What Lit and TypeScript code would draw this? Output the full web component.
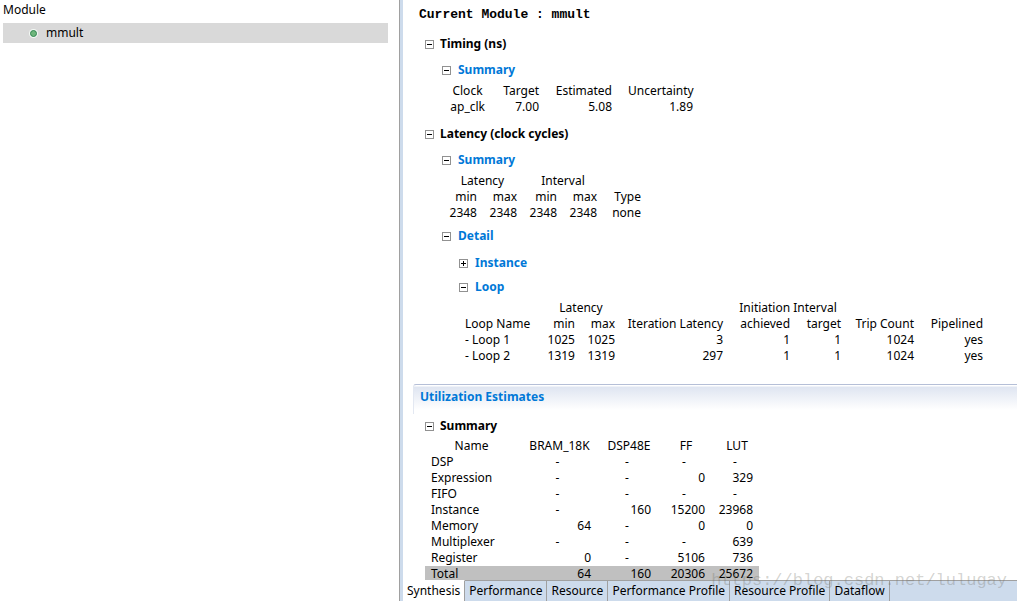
import { LitElement, html, css, svg, nothing } from "lit";
import { customElement, property, state } from "lit/decorators.js";
import { classMap } from "lit/directives/class-map.js";

interface HeadCell {
  text: string;
  span?: number;
}

const TABS = ["Synthesis", "Performance", "Resource", "Performance Profile", "Resource Profile", "Dataflow"];

@customElement("report-section")
class ReportSection extends LitElement {
  static styles = css`
    :host {
      display: block;
    }
    .heading {
      margin: 0;
      font-size: 12px;
      line-height: 16px;
    }
    .toggle {
      display: flex;
      align-items: center;
      gap: 6px;
      height: 26px;
      padding: 0;
      border: 0;
      background: none;
      color: #000;
      font: bold 12px/16px "Noto Sans", sans-serif;
      cursor: pointer;
    }
    .compact {
      height: 24px;
    }
    .accent {
      gap: 7px;
      color: #0078d7;
    }
    .box {
      flex: none;
      display: block;
    }
  `;

  @property() label = "";
  @property({ type: Boolean }) accent = false;
  @property({ type: Boolean }) compact = false;
  @property({ type: Boolean }) open = false;

  render() {
    return html`
      <h3 class="heading">
        <button
          class=${classMap({ toggle: true, accent: this.accent, compact: this.compact })}
          aria-expanded=${this.open ? "true" : "false"}
          @click=${() => (this.open = !this.open)}
        >
          <svg class="box" width="9" height="9" viewBox="0 0 9 9" shape-rendering="crispEdges" aria-hidden="true">
            <rect x="0.5" y="0.5" width="8" height="8" fill="#fff" stroke="#919191" />
            <path d="M2 4.5H7" stroke="#000" />
            ${this.open ? nothing : svg`<path d="M4.5 2V7" stroke="#000" />`}
          </svg>
          ${this.label}
        </button>
      </h3>
      ${this.open ? html`<slot></slot>` : nothing}
    `;
  }
}

@customElement("report-table")
class ReportTable extends LitElement {
  static styles = css`
    :host {
      display: block;
    }
    .table {
      table-layout: fixed;
      width: 0;
      border-collapse: collapse;
      font-size: 12px;
      line-height: 16px;
    }
    .cell {
      height: 16px;
      padding: 0 6px;
      text-align: right;
      font-weight: normal;
      white-space: nowrap;
    }
    .roomy .cell {
      padding: 0 8px;
    }
    .roomy .head:first-child,
    .group,
    .dash {
      text-align: center;
    }
    .name {
      text-align: left;
    }
    .centered .head {
      padding: 0 4px 0 8px;
      text-align: center;
    }
    .centered .head.name {
      padding: 0 6px;
    }
    .total {
      background: #c0c0c0;
    }
  `;

  @property({ attribute: false }) widths: number[] = [];
  @property({ attribute: false }) groups: HeadCell[] = [];
  @property({ attribute: false }) heads: string[] = [];
  @property({ attribute: false }) rows: string[][] = [];
  @property({ type: Boolean }) roomy = false;
  @property({ type: Boolean }) centered = false;
  @property({ type: Boolean }) named = false;

  render() {
    return html`
      <table class=${classMap({ table: true, roomy: this.roomy, centered: this.centered })}>
        <colgroup>
          ${this.widths.map((w) => html`<col style="width:${w}px" />`)}
        </colgroup>
        <thead>
          ${this.groups.length
            ? html`<tr>
                ${this.groups.map((g) =>
                  g.text
                    ? html`<th class="cell group" colspan=${g.span ?? 1}>${g.text}</th>`
                    : html`<td class="cell" colspan=${g.span ?? 1}></td>`
                )}
              </tr>`
            : nothing}
          <tr>
            ${this.heads.map(
              (h, i) => html`<th class=${classMap({ cell: true, head: true, name: this.named && i === 0 })}>${h}</th>`
            )}
          </tr>
        </thead>
        <tbody>
          ${this.rows.map(
            (r) => html`<tr class=${classMap({ total: r[0] === "Total" })}>
              ${r.map(
                (c, i) =>
                  html`<td class=${classMap({ cell: true, dash: c === "-", name: this.named && i === 0 })}>${c}</td>`
              )}
            </tr>`
          )}
        </tbody>
      </table>
    `;
  }
}

@customElement("app-root")
class AppRoot extends LitElement {
  static styles = css`
    :host {
      display: block;
      font: 12px/16px "Noto Sans", sans-serif;
      color: #000;
      background: #fff;
    }
    .shell {
      position: relative;
      display: grid;
      grid-template-columns: 400px minmax(0, 1fr);
      height: 100vh;
      overflow: hidden;
    }
    .modules {
      border-right: 1px solid #a0a0a0;
      padding: 2px 11px 0 3px;
    }
    .caption {
      margin: 0 0 5px;
      font-size: 12px;
      font-weight: normal;
    }
    .module {
      display: flex;
      align-items: center;
      gap: 8px;
      width: 100%;
      height: 20px;
      padding: 0 0 0 26px;
      border: 0;
      background: #d9d9d9;
      color: inherit;
      font: inherit;
    }
    .editor {
      display: flex;
      flex-direction: column;
      min-height: 0;
      border-left: 3px solid #cddbec;
    }
    .report {
      flex: 1;
      min-height: 0;
      overflow: auto;
      scrollbar-width: none;
      padding: 7px 0 0 10px;
    }
    .title {
      margin: 0 0 8px 6px;
      font: bold 13px/16px "Liberation Mono", monospace;
    }
    .block {
      margin-left: 12px;
    }
    .nested {
      margin-left: 17px;
    }
    .later {
      margin-top: 6px;
    }
    .detail {
      margin-top: 2px;
    }
    .first {
      padding-top: 2px;
    }
    .loops {
      padding-top: 1px;
    }
    .band {
      box-sizing: border-box;
      height: 30px;
      margin: 20px 0 0;
      padding: 4px 6px;
      border-top: 1px solid #b5bfd7;
      border-left: 1px solid #e3e8f2;
      border-top-left-radius: 3px;
      background: linear-gradient(#fff 1px, #dfe5f1 2px, #fff 25px);
      color: #0078d7;
      font: bold 12px/16px "Noto Sans", sans-serif;
    }
    .tabs {
      flex: none;
      display: flex;
      height: 21px;
      background: #cddbec;
    }
    .tab {
      padding: 0 4px;
      border: 0;
      border-top: 1px solid #a0a0a0;
      border-right: 1px solid #a0a0a0;
      background: #cddbec;
      color: inherit;
      font: inherit;
      white-space: nowrap;
    }
    .current {
      border-top-color: #fff;
      background: #fff;
    }
    .rest {
      flex: 1;
      border-top: 1px solid #a0a0a0;
    }
    .watermark {
      position: absolute;
      right: 10px;
      bottom: 10px;
      color: rgba(110, 110, 100, 0.3);
      font: 17px/20px "Liberation Mono", monospace;
      pointer-events: none;
    }
  `;

  @state() private tab = 0;

  render() {
    return html`
      <div class="shell">
        <nav class="modules">
          <h2 class="caption">Module</h2>
          <button class="module">
            <svg width="9" height="9" viewBox="0 0 9 9" aria-hidden="true">
              <circle cx="4.5" cy="4.5" r="4.5" fill="#f4faf5" />
              <circle cx="4.5" cy="4.5" r="3" fill="#6fb67c" stroke="#2f8650" />
            </svg>
            mmult
          </button>
        </nav>
        <main class="editor">
          <div class="report">
            <h1 class="title">Current Module : mmult</h1>
            <report-section class="block" label="Timing (ns)" open>
              <report-section class="nested" label="Summary" accent open>
                <report-table
                  roomy
                  .widths=${[51, 54, 73, 81]}
                  .heads=${["Clock", "Target", "Estimated", "Uncertainty"]}
                  .rows=${[["ap_clk", "7.00", "5.08", "1.89"]]}
                ></report-table>
              </report-section>
            </report-section>
            <report-section class="block later" label="Latency (clock cycles)" open>
              <report-section class="nested" label="Summary" accent open>
                <report-table
                  .widths=${[41, 40, 40, 40, 44]}
                  .groups=${[{ text: "Latency", span: 2 }, { text: "Interval", span: 2 }, { text: "" }]}
                  .heads=${["min", "max", "min", "max", "Type"]}
                  .rows=${[["2348", "2348", "2348", "2348", "none"]]}
                ></report-table>
              </report-section>
              <report-section class="nested detail" label="Detail" accent open>
                <report-section class="nested first" label="Instance" accent compact></report-section>
                <report-section class="nested" label="Loop" accent compact open>
                  <report-table
                    class="loops"
                    named
                    .widths=${[82, 40, 40, 108, 67, 51, 73, 69]}
                    .groups=${[
                      { text: "" },
                      { text: "Latency", span: 2 },
                      { text: "" },
                      { text: "Initiation Interval", span: 2 },
                      { text: "", span: 2 },
                    ]}
                    .heads=${[
                      "Loop Name",
                      "min",
                      "max",
                      "Iteration Latency",
                      "achieved",
                      "target",
                      "Trip Count",
                      "Pipelined",
                    ]}
                    .rows=${[
                      ["- Loop 1", "1025", "1025", "3", "1", "1", "1024", "yes"],
                      ["- Loop 2", "1319", "1319", "297", "1", "1", "1024", "yes"],
                    ]}
                  ></report-table>
                </report-section>
              </report-section>
            </report-section>
            <h2 class="band">Utilization Estimates</h2>
            <report-section class="block" label="Summary" compact open>
              <report-table
                centered
                named
                .widths=${[93, 79, 60, 54, 48]}
                .heads=${["Name", "BRAM_18K", "DSP48E", "FF", "LUT"]}
                .rows=${[
                  ["DSP", "-", "-", "-", "-"],
                  ["Expression", "-", "-", "0", "329"],
                  ["FIFO", "-", "-", "-", "-"],
                  ["Instance", "-", "160", "15200", "23968"],
                  ["Memory", "64", "-", "0", "0"],
                  ["Multiplexer", "-", "-", "-", "639"],
                  ["Register", "0", "-", "5106", "736"],
                  ["Total", "64", "160", "20306", "25672"],
                ]}
              ></report-table>
            </report-section>
          </div>
          <div class="tabs" role="tablist">
            ${TABS.map(
              (t, i) => html`<button
                class=${classMap({ tab: true, current: i === this.tab })}
                role="tab"
                aria-selected=${i === this.tab ? "true" : "false"}
                @click=${() => (this.tab = i)}
              >
                ${t}
              </button>`
            )}
            <span class="rest"></span>
          </div>
        </main>
        <div class="watermark">https://blog.csdn.net/lulugay</div>
      </div>
    `;
  }
}
